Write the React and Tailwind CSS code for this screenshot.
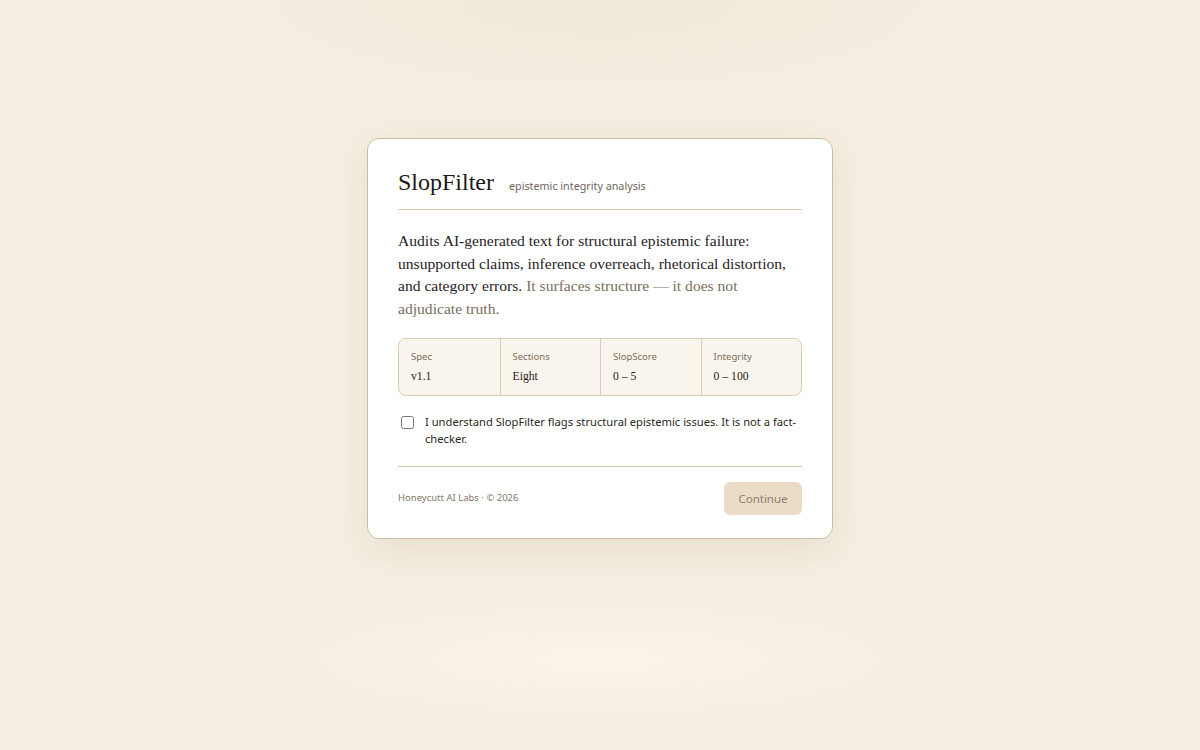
export default function App() {
  const stats = [
    { label: "Spec", value: "v1.1" },
    { label: "Sections", value: "Eight" },
    { label: "SlopScore", value: "0 – 5" },
    { label: "Integrity", value: "0 – 100" },
  ];
  return (
    <div
      className="min-h-screen w-full flex justify-center pt-[138px] bg-[#f5eee2]"
      style={{
        backgroundImage:
          "radial-gradient(ellipse 420px 110px at 50% 0%, rgba(240,232,218,0.9), rgba(240,232,218,0) 100%), radial-gradient(ellipse 320px 60px at 50% 88%, rgba(250,244,234,0.9), rgba(250,244,234,0) 100%)",
      }}
    >
      <div className="w-[466px] self-start rounded-[12px] border border-[#cdbd9f] bg-white px-[30px] pt-[28px] pb-[23px] shadow-[0_10px_40px_rgba(120,90,40,0.10)]">
        <div className="flex items-baseline gap-[15px] pb-[12px] border-b border-[#d6c8b0]">
          <h1 className="font-['Liberation_Serif',serif] text-[24px] leading-[30px] text-[#1c1a17]">SlopFilter</h1>
          <span className="text-[10.75px] text-[#6f655b]">epistemic integrity analysis</span>
        </div>
        <p className="mt-[20px] font-['Liberation_Serif',serif] text-[15.6px] leading-[22.7px] text-[#26221e]">
          Audits AI-generated text for structural epistemic failure: unsupported claims, inference overreach, rhetorical distortion, and category errors.{" "}
          <span className="text-[#7a6d60]">It surfaces structure — it does not adjudicate truth.</span>
        </p>
        <div className="mt-[17px] grid grid-cols-4 rounded-[8px] border border-[#dccdb3] bg-[#faf5ec]">
          {stats.map((s, i) => (
            <div key={s.label} className={"px-[12px] pt-[11px] pb-[10px] " + (i > 0 ? "border-l border-[#dccdb3]" : "")}>
              <div className="text-[9.5px] leading-[14px] text-[#7a6d60]">{s.label}</div>
              <div className="mt-[5px] font-['Liberation_Serif',serif] text-[11.7px] leading-[16px] text-[#26221e]">{s.value}</div>
            </div>
          ))}
        </div>
        <label className="mt-[17px] flex items-start gap-[11px] pl-[3px] pb-[19px] border-b border-[#d6c8b0]">
          <input type="checkbox" className="mt-[3px] h-[13px] w-[13px] shrink-0" />
          <span className="text-[11.2px] leading-[17px] text-[#2a2622]">
            I understand SlopFilter flags structural epistemic issues. It is not a fact-checker.
          </span>
        </label>
        <div className="mt-[15px] flex items-center justify-between">
          <span className="text-[9.5px] text-[#85786a]">Honeycutt AI Labs · © 2026</span>
          <button className="h-[33px] w-[78px] rounded-[6px] bg-[#ebdcc8] text-[11.5px] text-[#8f7f6c]">Continue</button>
        </div>
      </div>
    </div>
  );
}
